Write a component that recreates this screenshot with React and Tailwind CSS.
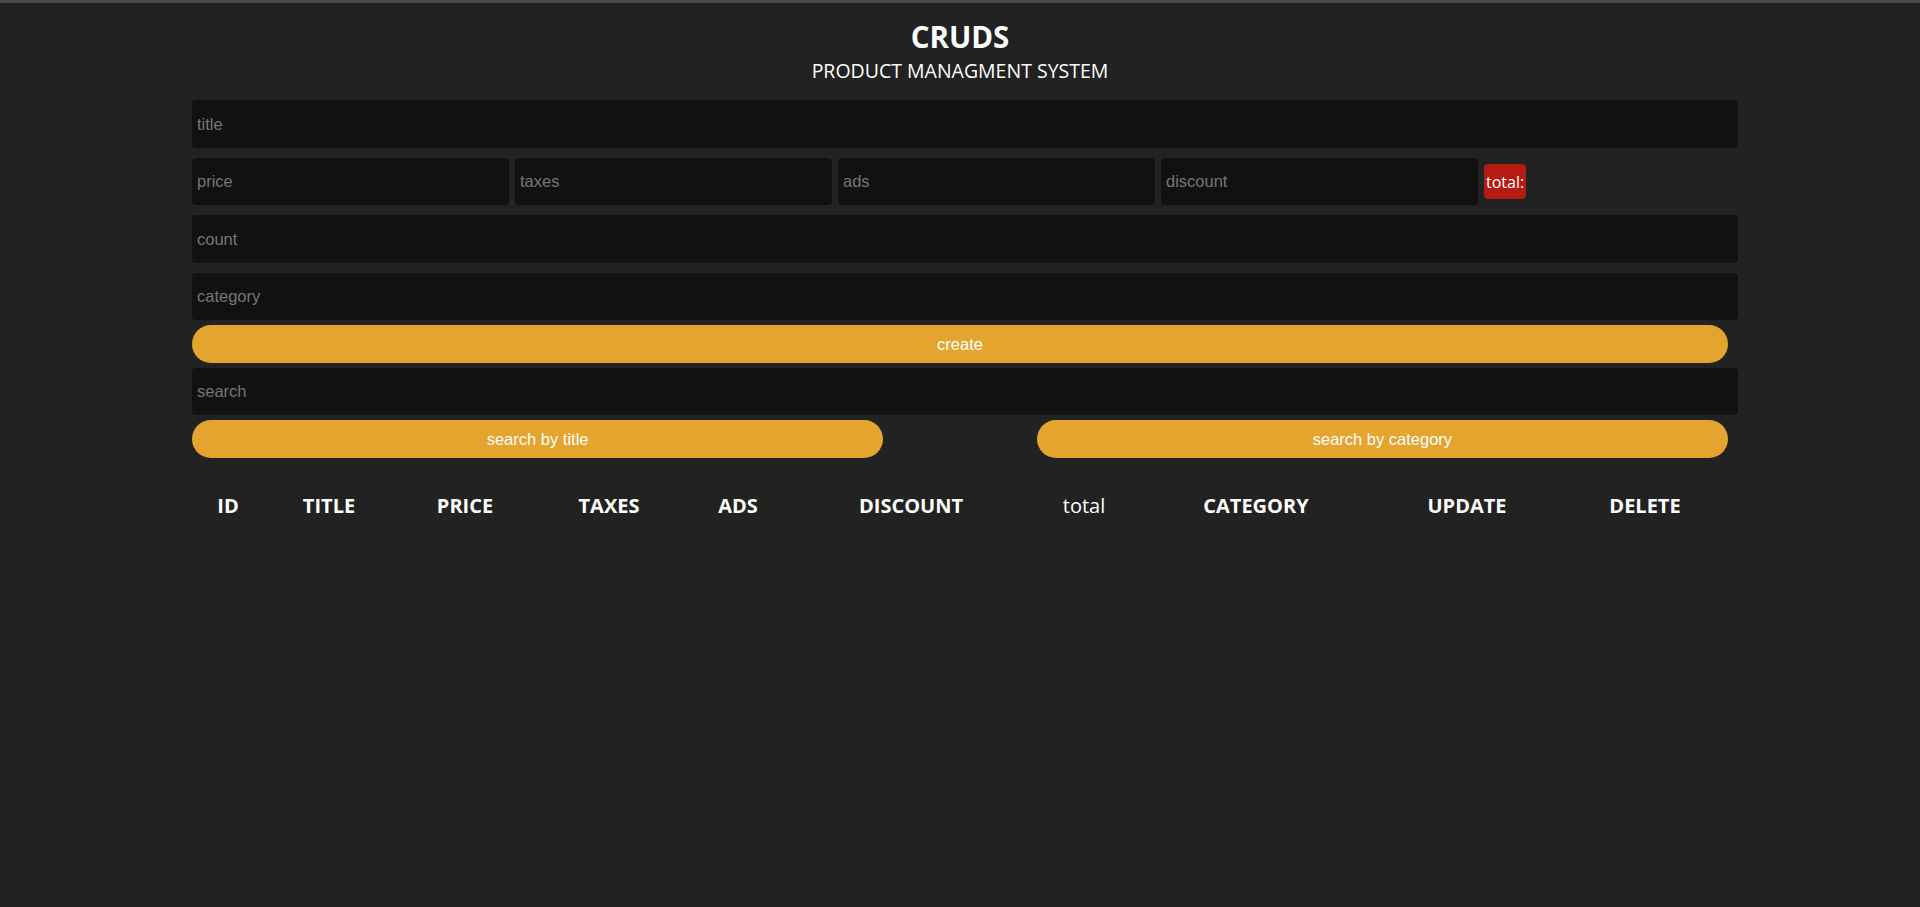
import React from 'react';

const inputCls =
  'h-[47px] rounded-[4px] bg-[#111111] px-[5px] text-[16.5px] text-white outline-none placeholder:text-[#767676]';

const columns = [
  { label: 'ID', w: 'w-[72px]' },
  { label: 'title', w: 'w-[130px]' },
  { label: 'price', w: 'w-[142px]' },
  { label: 'taxes', w: 'w-[146px]' },
  { label: 'ads', w: 'w-[112px]' },
  { label: 'discount', w: 'w-[234px]' },
  { label: 'total', w: 'w-[112px]', plain: true },
  { label: 'category', w: 'w-[232px]' },
  { label: 'update', w: 'w-[190px]' },
  { label: 'delete', w: 'w-[166px]' },
];

export default function App() {
  return (
    <div className="min-h-screen bg-[#222222] border-t-[3px] border-[#4a4a4a] font-['Liberation_Sans',Arial,sans-serif]">
      <div className="w-4/5 mx-auto pt-[16px]">
        {/* Head */}
        <div className="text-center text-white font-['Open_Sans',sans-serif]">
          <h2 className="text-[29.5px] font-bold leading-[36px]">CRUDS</h2>
          <p className="mt-[3px] text-[19.5px] leading-[26px]">PRODUCT MANAGMENT SYSTEM</p>
        </div>

        {/* Inputs */}
        <div className="mt-[16px] flex flex-col">
          <input type="text" placeholder="title" className={`${inputCls} w-[calc(100%+10px)] h-[48px]`} />

          <div className="mt-[10px] flex items-center gap-[6px]">
            <input type="number" placeholder="price" className={`${inputCls} w-[317px]`} />
            <input type="number" placeholder="taxes" className={`${inputCls} w-[317px]`} />
            <input type="number" placeholder="ads" className={`${inputCls} w-[317px]`} />
            <input type="number" placeholder="discount" className={`${inputCls} w-[317px]`} />
            <small className="h-[35px] px-[2px] rounded-[4px] bg-[#b41b12] text-white text-[16px] font-['Open_Sans',sans-serif] flex items-center">
              total:
            </small>
          </div>

          <input type="number" placeholder="count" className={`${inputCls} mt-[10px] w-[calc(100%+10px)] h-[48px]`} />
          <input type="text" placeholder="category" className={`${inputCls} mt-[10px] w-[calc(100%+10px)]`} />

          <button className="mt-[5px] h-[38px] w-full rounded-full bg-[#e5a42e] text-white text-[16.5px]">
            create
          </button>

          <input type="text" placeholder="search" className={`${inputCls} mt-[5px] w-[calc(100%+10px)]`} />

          <div className="mt-[5px] flex justify-between">
            <button className="h-[38px] w-[45%] rounded-full bg-[#e5a42e] text-white text-[16.5px]">
              search by title
            </button>
            <button className="h-[38px] w-[45%] rounded-full bg-[#e5a42e] text-white text-[16.5px]">
              search by category
            </button>
          </div>
        </div>

        {/* Table */}
        <table className="mt-[30px] w-full table-fixed text-white font-['Open_Sans',sans-serif] text-[20px]">
          <thead>
            <tr>
              {columns.map((c) => (
                <th
                  key={c.label}
                  className={`${c.w} h-[36px] text-center ${c.plain ? 'font-normal' : 'font-bold uppercase'}`}
                >
                  {c.label}
                </th>
              ))}
            </tr>
          </thead>
          <tbody></tbody>
        </table>
      </div>
    </div>
  );
}
